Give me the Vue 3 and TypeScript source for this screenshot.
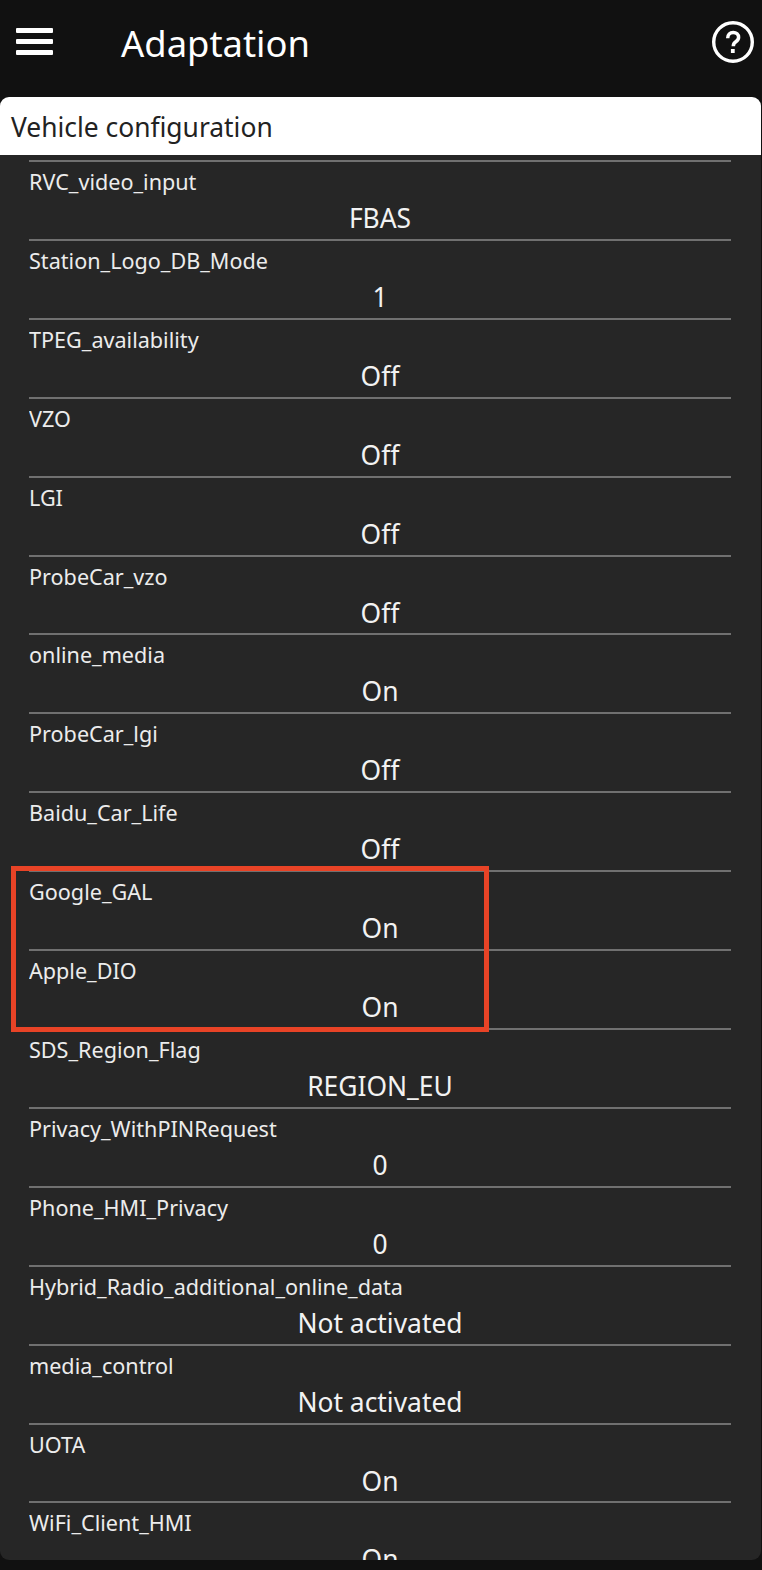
<script setup lang="ts">
interface ConfigRow {
  name: string;
  value: string;
}

const rows: ConfigRow[] = [
  { name: 'RVC_video_input', value: 'FBAS' },
  { name: 'Station_Logo_DB_Mode', value: '1' },
  { name: 'TPEG_availability', value: 'Off' },
  { name: 'VZO', value: 'Off' },
  { name: 'LGI', value: 'Off' },
  { name: 'ProbeCar_vzo', value: 'Off' },
  { name: 'online_media', value: 'On' },
  { name: 'ProbeCar_lgi', value: 'Off' },
  { name: 'Baidu_Car_Life', value: 'Off' },
  { name: 'Google_GAL', value: 'On' },
  { name: 'Apple_DIO', value: 'On' },
  { name: 'SDS_Region_Flag', value: 'REGION_EU' },
  { name: 'Privacy_WithPINRequest', value: '0' },
  { name: 'Phone_HMI_Privacy', value: '0' },
  { name: 'Hybrid_Radio_additional_online_data', value: 'Not activated' },
  { name: 'media_control', value: 'Not activated' },
  { name: 'UOTA', value: 'On' },
  { name: 'WiFi_Client_HMI', value: 'On' },
];
</script>

<template>
  <div class="screen">
    <header class="topbar">
      <div class="burger"><span></span><span></span><span></span></div>
      <h1 class="title">Adaptation</h1>
      <svg class="help" viewBox="0 0 44 44" width="44" height="44">
        <circle cx="22" cy="22" r="19.3" fill="none" stroke="#fff" stroke-width="3.4" />
        <path d="M16.7 18.2c0-3.600 2.300-5.700 5.500-5.700 3.200 0 5.400 2 5.400 4.800 0 2.200-1.200 3.400-2.800 4.500-1.600 1.100-2.500 2-2.500 4.400" fill="none" stroke="#fff" stroke-width="3.500" />
        <rect x="19.900" y="29" width="3.800" height="4" fill="#fff" />
      </svg>
    </header>
    <section class="card">
      <div class="card-head">Vehicle configuration</div>
      <div class="list">
        <div v-for="row in rows" :key="row.name" class="row">
          <div class="name">{{ row.name }}</div>
          <div class="value">{{ row.value }}</div>
        </div>
      </div>
      <div class="highlight"></div>
    </section>
  </div>
</template>

<style>
html,
body {
  margin: 0;
  background: #111111;
}
</style>

<style scoped>
.screen {
  width: 762px;
  height: 1570px;
  background: #111111;
  overflow: hidden;
  font-family: "Noto Sans", "Open Sans", sans-serif;
}
.topbar {
  height: 97px;
  display: flex;
  align-items: flex-start;
  box-sizing: border-box;
  padding: 0 7px 0 16px;
}
.burger {
  width: 37px;
  margin-top: 28px;
  display: flex;
  flex-direction: column;
  gap: 6.5px;
}
.burger span {
  height: 4.500px;
  background: #fff;
  border-radius: 1px;
}
.title {
  margin: 18px 0 0 68px;
  font-size: 36.4px;
  font-weight: 400;
  line-height: 50px;
  color: #fff;
  flex: 1;
}
.help {
  margin-top: 20px;
}
.card {
  position: relative;
  height: 1463px;
  background: #262626;
  border-radius: 9px;
  overflow: hidden;
  margin-right: 1px;
}
.card-head {
  height: 58px;
  box-sizing: border-box;
  background: #fff;
  color: #222;
  font-size: 26.4px;
  line-height: 60px;
  padding-left: 11px;
}
.list {
  height: 1405px;
  overflow: hidden;
  padding: 5px 30px 0 29px;
}
.row {
  height: 78.92px;
  box-sizing: border-box;
  border-top: 2px solid #707070;
  overflow: hidden;
}
.name {
  height: 37px;
  font-size: 21.6px;
  line-height: 39px;
  color: #ececec;
  white-space: nowrap;
}
.value {
  font-size: 26.4px;
  line-height: 39px;
  color: #f2f2f2;
  text-align: center;
  white-space: nowrap;
}
.highlight {
  position: absolute;
  left: 11px;
  top: 769px;
  width: 478px;
  height: 166px;
  box-sizing: border-box;
  border: 5px solid #e84326;
}
</style>
